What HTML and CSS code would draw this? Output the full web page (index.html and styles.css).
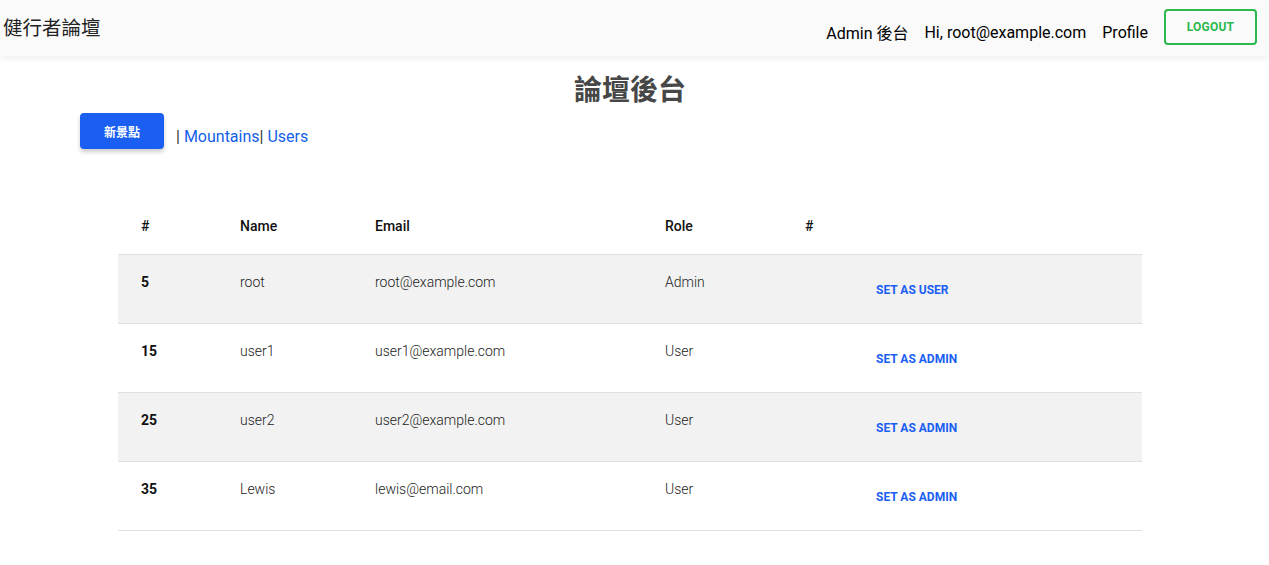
FILE: index.html
```html
<!DOCTYPE html>
<html lang="zh-Hant">
<head>
<meta charset="utf-8">
<title>論壇後台</title>
<link rel="stylesheet" href="styles.css">
</head>
<body>
<header class="topbar">
  <div class="brand">健行者論壇</div>
  <nav class="nav">
    <a class="nav-link" href="#">Admin 後台</a>
    <span class="nav-link">Hi, root@example.com</span>
    <a class="nav-link" href="#">Profile</a>
    <button class="logout">LOGOUT</button>
  </nav>
</header>
<main class="main">
  <h1 class="title">論壇後台</h1>
  <div class="toolbar">
    <button class="btn-new">新景點</button>
    <span class="links">| <a href="#">Mountains</a>| <a href="#">Users</a></span>
  </div>
  <table class="users">
    <colgroup>
      <col class="c1"><col class="c2"><col class="c3"><col class="c4"><col class="c5"><col class="c6">
    </colgroup>
    <thead>
      <tr><th>#</th><th>Name</th><th>Email</th><th>Role</th><th>#</th><th></th></tr>
    </thead>
    <tbody>
      <tr class="alt"><td class="id">5</td><td>root</td><td>root@example.com</td><td>Admin</td><td></td><td><button class="act">SET AS USER</button></td></tr>
      <tr><td class="id">15</td><td>user1</td><td>user1@example.com</td><td>User</td><td></td><td><button class="act">SET AS ADMIN</button></td></tr>
      <tr class="alt"><td class="id">25</td><td>user2</td><td>user2@example.com</td><td>User</td><td></td><td><button class="act">SET AS ADMIN</button></td></tr>
      <tr><td class="id">35</td><td>Lewis</td><td>lewis@email.com</td><td>User</td><td></td><td><button class="act">SET AS ADMIN</button></td></tr>
    </tbody>
  </table>
</main>
</body>
</html>
```

FILE: styles.css
```css
* { box-sizing: border-box; }
html, body { margin: 0; padding: 0; background: #fff; }
body {
  font-family: Roboto, "Noto Sans CJK TC", "Noto Sans", sans-serif;
  color: #000;
}
.topbar {
  height: 56px;
  background: #fafafa;
  box-shadow: 0 2px 8px rgba(0,0,0,0.08);
  display: flex;
  align-items: flex-start;
  justify-content: space-between;
  padding: 0 12px 0 3px;
  position: relative;
  z-index: 1;
}
.brand {
  font-size: 19.5px;
  line-height: 24px;
  margin-top: 15px;
  color: #222;
  font-family: "Noto Sans CJK TC", sans-serif;
}
.nav {
  display: flex;
  align-items: center;
  height: 36px;
  margin-top: 9px;
}
.nav-link {
  font-size: 16px;
  color: #000;
  text-decoration: none;
  margin-left: 16px;
  margin-top: 10px;
}
.logout {
  margin-left: 16px;
  width: 93px;
  height: 36px;
  border: 2px solid #2bb84c;
  border-radius: 4px;
  background: transparent;
  color: #2bb84c;
  font-family: Roboto, sans-serif;
  font-weight: 700;
  font-size: 12px;
  letter-spacing: 0.2px;
}
.main {
  width: 1260px;
}
.title {
  text-align: center;
  margin: 14px 0 0;
  font-size: 28px;
  line-height: 36px;
  font-weight: 700;
  color: #474747;
  font-family: "Noto Sans CJK TC", sans-serif;
}
.toolbar {
  display: flex;
  align-items: flex-end;
  padding-left: 80px;
  margin-top: 7px;
}
.btn-new {
  width: 84px;
  height: 36px;
  background: #1a5ff2;
  border: none;
  border-radius: 4px;
  color: #fff;
  font-family: "Noto Sans CJK TC", sans-serif;
  font-weight: 700;
  font-size: 12px;
  box-shadow: 0 3px 4px rgba(0,0,0,0.2);
}
.links {
  margin-left: 12px;
  font-size: 16px;
  line-height: 20px;
  padding-bottom: 2px;
  color: #333;
}
.links a { color: #1560e8; text-decoration: none; }
.users {
  margin: 49px auto 0;
  width: 1024px;
  border-collapse: collapse;
  table-layout: fixed;
  font-size: 14px;
}
.c1 { width: 99px; }
.c2 { width: 135px; }
.c3 { width: 290px; }
.c4 { width: 140px; }
.c5 { width: 71px; }
.c6 { width: auto; }
th {
  text-align: left;
  font-weight: 500;
  color: #111;
  padding: 16px 0 16px 23px;
  line-height: 24px;
  border-bottom: 1px solid #e0e0e0;
}
td {
  padding: 15px 0 0 23px;
  vertical-align: top;
  line-height: 24px;
  height: 69px;
  font-weight: 300;
  color: #222;
  border-bottom: 1px solid #e0e0e0;
}
td.id { font-weight: 700; color: #111; }
tr.alt td { background: #f2f2f2; }
.act {
  background: none;
  border: none;
  padding: 0;
  margin-top: 2px;
  height: 36px;
  color: #1a5ff2;
  font-family: Roboto, sans-serif;
  font-weight: 700;
  font-size: 12px;
}
```
